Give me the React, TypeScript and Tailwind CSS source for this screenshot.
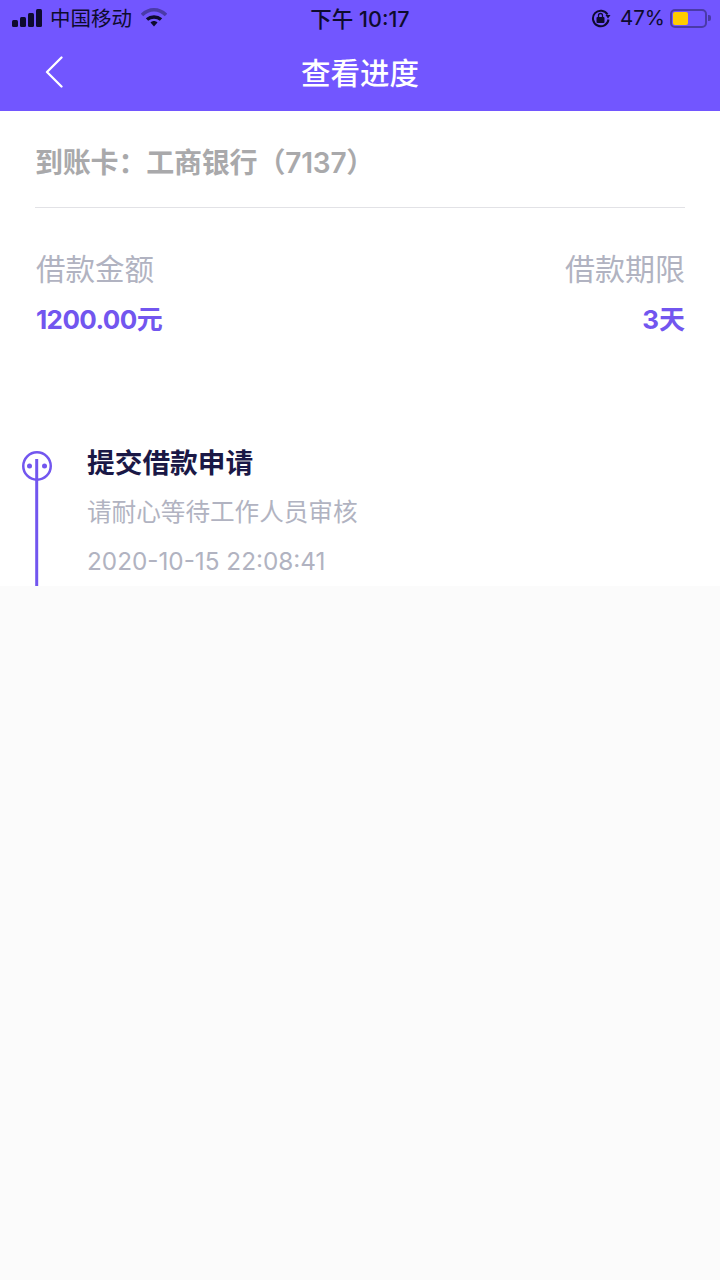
const font = { fontFamily: '"Inter", "Noto Sans CJK SC", sans-serif' };

function StatusBar() {
  return (
    <div className="h-9 flex items-center justify-between pl-3 pr-[9px] text-[#0e0b2e]">
      <div className="flex items-center w-[200px]">
        <svg width="30" height="20" viewBox="0 0 30 20" fill="currentColor">
          <rect x="0" y="12" width="6" height="7" rx="1.5" />
          <rect x="8" y="9" width="6" height="10" rx="1.5" />
          <rect x="16" y="5" width="6" height="14" rx="1.5" />
          <rect x="24" y="1" width="6" height="18" rx="1.5" />
        </svg>
        <span className="ml-[8px] text-[20.5px] leading-6 mt-[1px]">中国移动</span>
        <svg className="ml-[9px]" width="26" height="20" viewBox="0 0 26 20" fill="none">
          <path d="M1 7 C8 0 18 0 25 7" stroke="#4a3aa8" strokeWidth="3.5" />
          <path d="M6 11.5 C10 8 16 8 20 11.5" stroke="currentColor" strokeWidth="3.5" />
          <path d="M9.5 14.5 L13 18.5 L16.5 14.5 C14.5 12.5 11.5 12.5 9.5 14.5 Z" fill="currentColor" />
        </svg>
      </div>
      <span className="text-[21.5px] leading-6 font-medium absolute left-1/2 -translate-x-1/2 mt-[1px]">下午 10:17</span>
      <div className="flex items-center">
        <svg width="20" height="20" viewBox="0 0 20 20" fill="none" stroke="currentColor" strokeWidth="2">
          <path d="M16.5 6.5 A7.8 7.8 0 1 0 17.5 11.5" />
          <path d="M14.5 7 L19.5 7 L17 10.5 Z" fill="currentColor" stroke="none" />
          <rect x="5.5" y="9" width="8" height="6" rx="1" fill="currentColor" stroke="none" />
          <path d="M7.5 9 V7.5 a2 2 0 0 1 4 0 V9" strokeWidth="1.3" />
        </svg>
        <span className="ml-[9px] text-[20.5px] leading-6">47%</span>
        <div className="ml-[5px] w-[37px] h-[19px] border-2 border-[#4a3aa8] rounded-[5px] p-[1px]">
          <div className="w-[15px] h-full bg-[#ffcc00] rounded-[2px]" />
        </div>
        <div className="ml-[1px] w-[3px] h-[6px] bg-[#4a3aa8] rounded-r-[2px]" />
      </div>
    </div>
  );
}

export default function App() {
  return (
    <div className="min-h-[1280px] bg-[#fbfbfb] flex flex-col relative" style={font}>
      <div className="bg-[#7256ff]">
        <StatusBar />
        <div className="h-[75px] flex items-center justify-center relative">
          <svg className="absolute left-[45px] top-[20px]" width="18" height="32" viewBox="0 0 18 32" fill="none" stroke="white" strokeWidth="2.3" strokeLinecap="round" strokeLinejoin="round">
            <path d="M16.5 1.5 L2 16 L16.5 30.5" />
          </svg>
          <span className="text-white text-[29.5px] font-medium leading-none mt-[1px]">查看进度</span>
        </div>
      </div>
      <div className="bg-white h-[475px] flex flex-col">
        <div className="mx-[35px] h-[97px] shrink-0 border-b border-[#e2e2e6] flex items-center">
          <span className="text-[28px] font-semibold text-[#a9a9ab] leading-none mt-[8px] tracking-[-0.2px]">到账卡：工商银行（7137）</span>
        </div>
        <div className="mx-[35px] mt-[43px] flex justify-between">
          <div className="flex flex-col gap-[19px]">
            <span className="text-[29.5px] leading-[34px] text-[#b1b3c1] ml-[1px] mt-[1px]">借款金额</span>
            <span className="text-[26px] leading-[30px] font-bold text-[#7256ef] ml-[1px] tracking-[-0.6px]">1200.00元</span>
          </div>
          <div className="flex flex-col gap-[19px] items-end">
            <span className="text-[30px] leading-[34px] text-[#b1b3c1] mt-[1px]">借款期限</span>
            <span className="text-[26px] leading-[30px] font-bold text-[#7256ef]">3天</span>
          </div>
        </div>
        <div className="mt-[112px] flex pl-[22px]">
          <div className="w-[30px] h-[139px]">
            <svg width="30" height="139" viewBox="0 0 30 139" fill="none">
              <circle cx="15" cy="19" r="13.75" stroke="#7256ef" strokeWidth="2.5" />
              <path d="M14.7 12 V139" stroke="#7256ef" strokeWidth="3" />
              <circle cx="7.5" cy="19" r="2.5" fill="#7256ef" />
              <circle cx="22.5" cy="19" r="2.5" fill="#7256ef" />
            </svg>
          </div>
          <div className="ml-[35px] flex flex-col">
            <span className="text-[27.7px] leading-[32px] font-bold text-[#1a1846]">提交借款申请</span>
            <span className="text-[24.6px] leading-[30px] mt-[18px] text-[#b1b3c1]">请耐心等待工作人员审核</span>
            <span className="text-[24.3px] leading-[30px] mt-[19px] text-[#b1b3c1]">2020-10-15 22:08:41</span>
          </div>
        </div>
      </div>
    </div>
  );
}
